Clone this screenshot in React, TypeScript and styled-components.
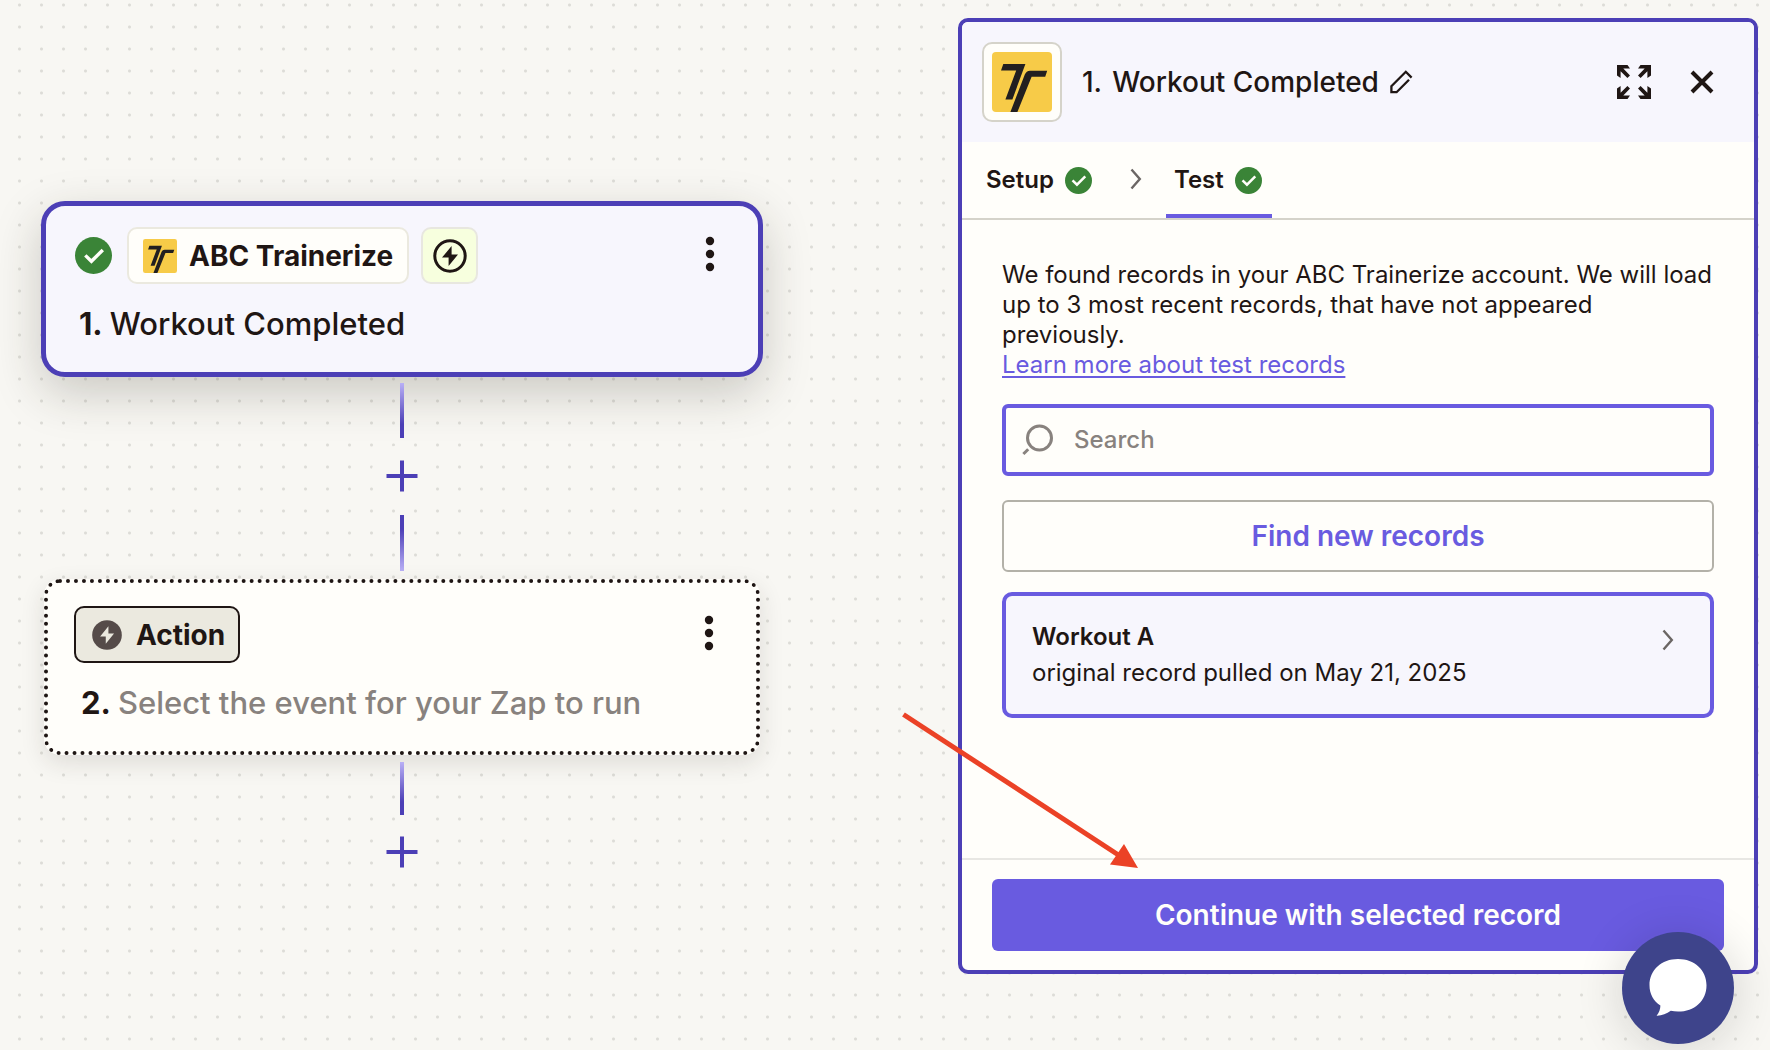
import React from "react";
import styled, { createGlobalStyle } from "styled-components";

const color = {
  canvas: "#f8f7f3",
  dot: "#dddcd7",
  surface: "#fffefa",
  tint: "#f7f6fd",
  ink: "#1f1614",
  muted: "#88827e",
  violet: "#695be0",
  indigo: "#4c3fb6",
  green: "#3a8437",
  line: "#d5d3ca",
};

const GlobalStyle = createGlobalStyle`
  *, *::before, *::after { box-sizing: border-box; }
  body {
    margin: 0;
    background: ${color.canvas};
    color: ${color.ink};
    font-family: Inter, "Liberation Sans", sans-serif;
  }
  button, input { font: inherit; color: inherit; }
  h1, h2, h3, p { margin: 0; }
  svg { display: block; flex: none; }
`;

const Page = styled.div`
  display: flex;
  align-items: flex-start;
  min-height: 100vh;
  background-image: radial-gradient(circle at 19.5px 5px, ${color.dot} 1px, transparent 2px);
  background-size: 22px 22px;
`;

const Canvas = styled.main`
  flex: 1 1 0;
  min-width: 0;
  padding: 201px 195px 0 41px;
`;

const Flow = styled.div`
  display: flex;
  flex-direction: column;
  align-items: center;
`;

const StepCard = styled.section<{ $selected?: boolean }>`
  width: ${(p) => (p.$selected ? "100%" : "calc(100% - 6px)")};
  padding: ${(p) => (p.$selected ? "21px 30px 28px 29px" : "23px 29px 28px 26px")};
  border: ${(p) => (p.$selected ? `5px solid ${color.indigo}` : `4px dotted ${color.ink}`)};
  border-radius: ${(p) => (p.$selected ? 24 : 16)}px;
  background: ${(p) => (p.$selected ? color.tint : color.surface)};
  box-shadow: ${(p) =>
    p.$selected ? "0 16px 48px rgba(40, 35, 25, 0.22)" : "0 8px 24px rgba(40, 35, 25, 0.12)"};
`;

const StepTop = styled.div`
  display: flex;
  align-items: center;
  gap: 12px;
`;

const StatusSlot = styled.span`
  margin-right: 3px;
`;

const Chip = styled.button<{ $dark?: boolean }>`
  display: flex;
  align-items: center;
  gap: ${(p) => (p.$dark ? 14 : 12)}px;
  height: 57px;
  padding: 0 ${(p) => (p.$dark ? 13 : 14)}px 0 ${(p) => (p.$dark ? 16 : 14)}px;
  border: 2px solid ${(p) => (p.$dark ? color.ink : "#ebe9df")};
  border-radius: 10px;
  background: ${(p) => (p.$dark ? "#ebe9df" : color.surface)};
  font-size: 28px;
  font-weight: 700;
  line-height: 36px;
  white-space: nowrap;
`;

const TriggerBadge = styled.span`
  display: grid;
  place-items: center;
  width: 57px;
  height: 57px;
  border: 2px solid #e8e7e0;
  border-radius: 10px;
  background: #f7ffde;
`;

const MenuButton = styled.button`
  display: grid;
  place-items: center;
  width: 36px;
  height: 53px;
  margin-left: auto;
  align-self: flex-start;
  padding: 0;
  border: 0;
  background: none;
`;

const StepTitle = styled.h2<{ $indent: number }>`
  display: flex;
  gap: 7px;
  margin-top: 20px;
  padding-left: ${(p) => p.$indent}px;
  font-size: 31px;
  font-weight: 500;
  line-height: 40px;
`;

const StepNumber = styled.span`
  font-weight: 700;
`;

const Placeholder = styled.span`
  color: ${color.muted};
`;

const Connector = styled.div<{ $up?: boolean; $last?: boolean }>`
  width: 4px;
  height: ${(p) => (p.$up ? 56 : p.$last ? 53 : 55)}px;
  margin: ${(p) => (p.$up ? "8px 0" : p.$last ? "7px 0 6px" : "6px 0 7px")};
  background: linear-gradient(
    ${(p) => (p.$up ? "to top" : "to bottom")},
    #b9b0f6,
    ${color.indigo} 75%
  );
`;

const AddButton = styled.button`
  display: grid;
  place-items: center;
  width: 62px;
  height: 62px;
  padding: 0;
  border: 0;
  border-radius: 50%;
  background: ${color.canvas};
`;

const Panel = styled.aside`
  position: relative;
  display: flex;
  flex-direction: column;
  flex: 0 1 800px;
  min-width: 0;
  min-height: calc(100vh - 94px);
  margin: 18px 12px 0 0;
  border: 4px solid ${color.indigo};
  border-radius: 10px;
  background: ${color.surface};
`;

const PanelHeader = styled.header`
  display: flex;
  align-items: center;
  height: 120px;
  padding: 0 30px 0 20px;
  border-radius: 6px 6px 0 0;
  background: ${color.tint};
`;

const AppTile = styled.span`
  display: grid;
  place-items: center;
  width: 80px;
  height: 80px;
  margin-right: 20px;
  border: 2px solid ${color.line};
  border-radius: 10px;
  background: ${color.surface};
`;

const PanelTitle = styled.h1`
  display: flex;
  gap: 10px;
  font-size: 28px;
  font-weight: 500;
  line-height: 36px;
  white-space: nowrap;
`;

const IconButton = styled.button`
  display: grid;
  place-items: center;
  width: 44px;
  height: 44px;
  padding: 0;
  border: 0;
  background: none;
`;

const HeaderActions = styled.div`
  display: flex;
  gap: 24px;
  margin-left: auto;
`;

const Tabs = styled.nav`
  display: flex;
  align-items: center;
  height: 78px;
  padding-left: 16px;
  border-bottom: 2px solid ${color.line};
`;

const Tab = styled.button<{ $active?: boolean }>`
  display: flex;
  align-items: center;
  gap: 11px;
  height: 76px;
  padding: 4px ${(p) => (p.$active ? 10 : 8)}px 0 8px;
  border: 0;
  border-bottom: 4px solid ${(p) => (p.$active ? color.violet : "transparent")};
  background: none;
  font-size: 24px;
  font-weight: 600;
  line-height: 30px;
`;

const TabArrow = styled.span`
  margin: 0 24px 2px 30px;
`;

const PanelBody = styled.div`
  flex: 1;
  padding: 40px;
`;

const Intro = styled.p`
  font-size: 24px;
  line-height: 30px;
`;

const Link = styled.a`
  display: inline-block;
  color: ${color.violet};
  text-decoration: underline;
  text-decoration-thickness: 2px;
  text-underline-offset: 3px;
`;

const SearchBox = styled.label`
  display: flex;
  align-items: center;
  gap: 18px;
  height: 72px;
  margin-top: 24px;
  padding: 0 16px;
  border: 4px solid ${color.violet};
  border-radius: 6px;
  background: ${color.surface};
`;

const SearchInput = styled.input`
  flex: 1;
  min-width: 0;
  padding: 0;
  border: 0;
  outline: 0;
  background: none;
  font-size: 24px;
  font-weight: 500;
  line-height: 30px;
  &::placeholder { color: ${color.muted}; opacity: 1; }
`;

const WideButton = styled.button<{ $primary?: boolean }>`
  width: 100%;
  height: 72px;
  padding: 0 0 0 ${(p) => (p.$primary ? 0 : 20)}px;
  border: ${(p) => (p.$primary ? "0" : "2px solid #b3b1a8")};
  border-radius: 6px;
  background: ${(p) => (p.$primary ? color.violet : color.surface)};
  color: ${(p) => (p.$primary ? "#fffefa" : color.violet)};
  font-size: 28px;
  font-weight: 600;
  line-height: 36px;
`;

const FindRow = styled.div`
  margin: 24px 0 20px;
`;

const RecordCard = styled.button`
  display: flex;
  justify-content: space-between;
  width: 100%;
  height: 126px;
  padding: 23px 36px 0 26px;
  border: 4px solid ${color.violet};
  border-radius: 10px;
  background: ${color.tint};
  font-size: 24px;
  line-height: 36px;
  text-align: left;
`;

const RecordText = styled.span`
  display: flex;
  flex-direction: column;
`;

const RecordName = styled.strong`
  font-weight: 600;
`;

const RecordArrow = styled.span`
  margin-top: 10px;
`;

const PanelFooter = styled.footer`
  padding: 19px 30px;
  border-top: 2px solid #e8e7e3;
`;

const Pointer = styled.svg`
  position: absolute;
  left: -64px;
  bottom: 96px;
  pointer-events: none;
`;

const ChatButton = styled.button`
  position: fixed;
  right: 36px;
  bottom: 6px;
  display: grid;
  place-items: center;
  width: 112px;
  height: 112px;
  padding: 0;
  border: 0;
  border-radius: 50%;
  background: #3e448b;
  box-shadow: 0 4px 48px rgba(20, 20, 20, 0.16);
`;

const AppLogo = ({ size }: { size: number }) => (
  <svg width={size} height={size} viewBox="0 0 60 60" aria-hidden="true">
    <rect width="60" height="60" rx="4" fill="#f7cb48" />
    <path
      d="M11.3 12H33.4L20.4 47.4H13.4L24.2 18.4H9Z M38 18.8H55.2L53.2 24.8H39.6L25.4 60H18.4L32.8 22.6Q34.4 18.8 38 18.8Z"
      fill="#221f20"
    />
  </svg>
);

const Check = ({ size }: { size: number }) => (
  <svg width={size} height={size} viewBox="0 0 37 37" aria-label="Complete" role="img">
    <circle cx="18.5" cy="18.5" r="18.5" fill={color.green} />
    <path d="M10.3 18.4L16.4 24.3L27.8 13" fill="none" stroke="#fffefa" strokeWidth="3.4" />
  </svg>
);

const Bolt = ({ filled }: { filled?: boolean }) =>
  filled ? (
    <svg width="30" height="30" viewBox="0 0 34 34" aria-hidden="true">
      <circle cx="17" cy="17" r="16.8" fill="#554b49" />
      <path d="M18.6 7L9.2 18.8H15.6V27L25 15.2H18.6Z" fill="#ebe9df" />
    </svg>
  ) : (
    <svg width="34" height="34" viewBox="0 0 34 34" aria-hidden="true">
      <circle cx="17" cy="17" r="15.2" fill="none" stroke={color.ink} strokeWidth="3" />
      <path d="M18.6 7L9 18.6H15.6V27L25 15.4H18.6Z" fill={color.ink} />
    </svg>
  );

const Kebab = () => (
  <svg width="10" height="36" viewBox="0 0 10 36" aria-hidden="true">
    {[5, 18, 31].map((y) => (
      <circle key={y} cx="5" cy={y} r="4.2" fill={color.ink} />
    ))}
  </svg>
);

const Plus = () => (
  <svg width="32" height="32" viewBox="0 0 32 32" aria-hidden="true">
    <path d="M16 0.5V31.5M0.5 16H31.5" stroke={color.indigo} strokeWidth="4" />
  </svg>
);

const Chevron = () => (
  <svg width="12" height="22" viewBox="0 0 12 22" aria-hidden="true">
    <path d="M1.5 1.5L9.8 11L1.5 20.5" fill="none" stroke="#6b6664" strokeWidth="2.4" />
  </svg>
);

const Pencil = () => (
  <svg width="24" height="24" viewBox="0 0 24 24" aria-hidden="true">
    <path
      d="M22.6 7.6L16.8 1.8L2.4 16.2V22.2H7.6L20 9.8"
      fill="none"
      stroke={color.ink}
      strokeWidth="2.3"
    />
  </svg>
);

const Expand = () => (
  <svg width="34" height="34" viewBox="0 0 34 34" aria-hidden="true">
    {[0, 90, 180, 270].map((turn) => (
      <g key={turn} transform={`rotate(${turn} 17 17)`}>
        <path d="M0 0H10.5L13 3.6H6.3L13 10.4L10.4 13L3.6 6.3V13L0 10.5Z" fill={color.ink} />
      </g>
    ))}
  </svg>
);

const Cross = () => (
  <svg width="24" height="24" viewBox="0 0 24 24" aria-hidden="true">
    <path d="M2 2L22 22M22 2L2 22" stroke={color.ink} strokeWidth="4" />
  </svg>
);

const Magnifier = () => (
  <svg width="34" height="34" viewBox="0 0 34 34" aria-hidden="true">
    <circle cx="17.5" cy="15" r="12" fill="none" stroke={color.muted} strokeWidth="3" />
    <path d="M6.2 26.2L1.4 31" stroke={color.muted} strokeWidth="3" />
  </svg>
);

const Bubble = () => (
  <svg width="58" height="58" viewBox="0 0 58 58" aria-hidden="true">
    <path
      d="M29 0C45.5 0 57.5 11 57.5 26.2C57.5 42 45.5 52.6 29 52.6C26.4 52.6 24 52.3 21.8 51.8C17.5 54.6 12.6 57 7.6 56.8C10.2 53.5 11.4 50 11.4 46.6C4.5 42 0.5 35 0.5 26.2C0.5 11 12.5 0 29 0Z"
      fill="#ffffff"
    />
  </svg>
);

export default function App() {
  return (
    <>
      <GlobalStyle />
      <Page>
        <Canvas>
          <Flow>
            <StepCard $selected>
              <StepTop>
                <StatusSlot>
                  <Check size={37} />
                </StatusSlot>
                <Chip type="button">
                  <AppLogo size={34} />
                  ABC Trainerize
                </Chip>
                <TriggerBadge>
                  <Bolt />
                </TriggerBadge>
                <MenuButton type="button" aria-label="Step 1 options">
                  <Kebab />
                </MenuButton>
              </StepTop>
              <StepTitle $indent={4}>
                <StepNumber>1.</StepNumber>
                <span>Workout Completed</span>
              </StepTitle>
            </StepCard>
            <Connector />
            <AddButton type="button" aria-label="Add step">
              <Plus />
            </AddButton>
            <Connector $up />
            <StepCard>
              <StepTop>
                <Chip type="button" $dark>
                  <Bolt filled />
                  Action
                </Chip>
                <MenuButton type="button" aria-label="Step 2 options">
                  <Kebab />
                </MenuButton>
              </StepTop>
              <StepTitle $indent={7}>
                <StepNumber>2.</StepNumber>
                <Placeholder>Select the event for your Zap to run</Placeholder>
              </StepTitle>
            </StepCard>
            <Connector $last />
            <AddButton type="button" aria-label="Add final step">
              <Plus />
            </AddButton>
          </Flow>
        </Canvas>

        <Panel>
          <PanelHeader>
            <AppTile>
              <AppLogo size={60} />
            </AppTile>
            <PanelTitle>
              <span>1.</span>
              <span>Workout Completed</span>
            </PanelTitle>
            <IconButton type="button" aria-label="Rename step">
              <Pencil />
            </IconButton>
            <HeaderActions>
              <IconButton type="button" aria-label="Expand panel">
                <Expand />
              </IconButton>
              <IconButton type="button" aria-label="Close panel">
                <Cross />
              </IconButton>
            </HeaderActions>
          </PanelHeader>
          <Tabs>
            <Tab type="button">
              Setup
              <Check size={27} />
            </Tab>
            <TabArrow>
              <Chevron />
            </TabArrow>
            <Tab type="button" $active>
              Test
              <Check size={27} />
            </Tab>
          </Tabs>
          <PanelBody>
            <Intro>
              We found records in your ABC Trainerize account. We will load up to 3 most recent
              records, that have not appeared previously.
              <br />
              <Link href="#test-records">Learn more about test records</Link>
            </Intro>
            <SearchBox>
              <Magnifier />
              <SearchInput type="search" placeholder="Search" aria-label="Search records" />
            </SearchBox>
            <FindRow>
              <WideButton type="button">Find new records</WideButton>
            </FindRow>
            <RecordCard type="button">
              <RecordText>
                <RecordName>Workout A</RecordName>
                <span>original record pulled on May 21, 2025</span>
              </RecordText>
              <RecordArrow>
                <Chevron />
              </RecordArrow>
            </RecordCard>
          </PanelBody>
          <PanelFooter>
            <WideButton type="button" $primary>
              Continue with selected record
            </WideButton>
          </PanelFooter>
          <Pointer width="248" height="164" viewBox="0 0 248 164" aria-hidden="true">
            <path d="M5.5 4.5L222 146" stroke="#eb4226" strokeWidth="5" />
            <path d="M226 134L240 158L212 154.5Z" fill="#eb4226" />
          </Pointer>
        </Panel>
      </Page>
      <ChatButton type="button" aria-label="Open chat">
        <Bubble />
      </ChatButton>
    </>
  );
}
